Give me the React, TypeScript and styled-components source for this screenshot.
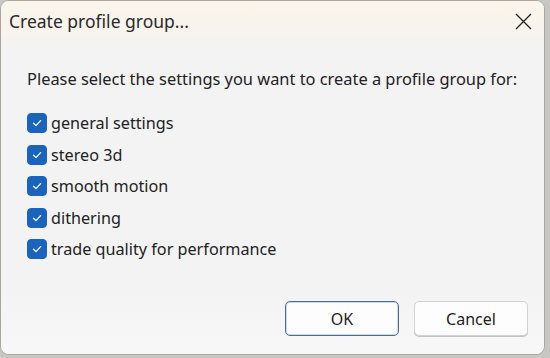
import React, { useState } from "react";
import styled, { createGlobalStyle } from "styled-components";

const GlobalStyle = createGlobalStyle`
  html, body {
    margin: 0;
    padding: 0;
    background: #b9b7b3;
  }
  body {
    font-family: "Noto Sans", "Open Sans", sans-serif;
  }
`;

const Screen = styled.div`
  width: 550px;
  height: 358px;
  overflow: hidden;
  background: #c9c7c3;
`;

const Dialog = styled.div`
  width: 545px;
  height: 355px;
  box-sizing: border-box;
  border: 1px solid #a9a6a1;
  border-radius: 9px;
  overflow: hidden;
  display: flex;
  flex-direction: column;
  background: #f3f3f3;
  color: #1c1c1c;
`;

const TitleBar = styled.div`
  height: 40px;
  flex: none;
  display: flex;
  align-items: center;
  justify-content: space-between;
  padding: 0 9px 0 8px;
  background: linear-gradient(#fbf5ea, #f6f3ee);
`;

const Title = styled.span`
  font-size: 17.5px;
  color: #2a2a2a;
`;

const CloseButton = styled.button`
  width: 24px;
  height: 24px;
  padding: 0;
  border: none;
  background: transparent;
  display: flex;
  align-items: center;
  justify-content: center;
`;

const Body = styled.div`
  flex: 1;
  display: flex;
  flex-direction: column;
  padding: 27px 0 0 26px;
`;

const Prompt = styled.p`
  margin: 0 0 23px;
  font-size: 16.4px;
  line-height: 22px;
  color: #222;
`;

const OptionList = styled.div`
  display: flex;
  flex-direction: column;
  gap: 11.5px;
`;

const Option = styled.label`
  display: flex;
  align-items: center;
  gap: 4px;
  height: 20px;
  font-size: 16.2px;
  line-height: 20px;
  color: #222;
  cursor: default;
`;

const Box = styled.span<{ $checked: boolean }>`
  width: 20px;
  height: 20px;
  box-sizing: border-box;
  border-radius: 4px;
  display: flex;
  align-items: center;
  justify-content: center;
  background: ${({ $checked }) => ($checked ? "#1b64bd" : "#fff")};
  border: 1px solid ${({ $checked }) => ($checked ? "#1b64bd" : "#888")};
`;

const Footer = styled.div`
  height: 64px;
  flex: none;
  display: flex;
  justify-content: flex-end;
  align-items: flex-start;
  gap: 15px;
  padding: 11px 16px 0 0;
  box-sizing: border-box;
  background: linear-gradient(#f3f3f3, #f8f8f8);
`;

const DialogButton = styled.button<{ $primary?: boolean }>`
  width: 114px;
  height: 35px;
  box-sizing: border-box;
  border-radius: 5px;
  background: #fdfdfd;
  border: 1px solid ${({ $primary }) => ($primary ? "#4c6f8f" : "#d2d2d2")};
  box-shadow: ${({ $primary }) =>
    $primary ? "inset 0 0 0 1px #c7dbec" : "0 1px 0 #c4c4c4"};
  font-family: "Noto Sans", "Open Sans", sans-serif;
  font-size: 16px;
  color: #1e1e1e;
`;

const options = [
  "general settings",
  "stereo 3d",
  "smooth motion",
  "dithering",
  "trade quality for performance",
];

export default function App() {
  const [checked, setChecked] = useState(options.map(() => true));

  return (
    <Screen>
      <GlobalStyle />
      <Dialog>
        <TitleBar>
          <Title>Create profile group...</Title>
          <CloseButton aria-label="Close">
            <svg width="17" height="17" viewBox="0 0 17 17">
              <path
                d="M1 1 L16 16 M16 1 L1 16"
                stroke="#222"
                strokeWidth="1.3"
                fill="none"
              />
            </svg>
          </CloseButton>
        </TitleBar>
        <Body>
          <Prompt>Please select the settings you want to create a profile group for:</Prompt>
          <OptionList>
            {options.map((o, i) => (
              <Option
                key={o}
                onClick={() =>
                  setChecked((c) => c.map((v, j) => (j === i ? !v : v)))
                }
              >
                <Box $checked={checked[i]}>
                  {checked[i] && (
                    <svg width="12" height="12" viewBox="0 0 12 12">
                      <path
                        d="M2.5 6.2 L5 8.6 L9.6 3.6"
                        stroke="#fff"
                        strokeWidth="1.3"
                        fill="none"
                        strokeLinecap="round"
                        strokeLinejoin="round"
                      />
                    </svg>
                  )}
                </Box>
                {o}
              </Option>
            ))}
          </OptionList>
        </Body>
        <Footer>
          <DialogButton $primary>OK</DialogButton>
          <DialogButton>Cancel</DialogButton>
        </Footer>
      </Dialog>
    </Screen>
  );
}
